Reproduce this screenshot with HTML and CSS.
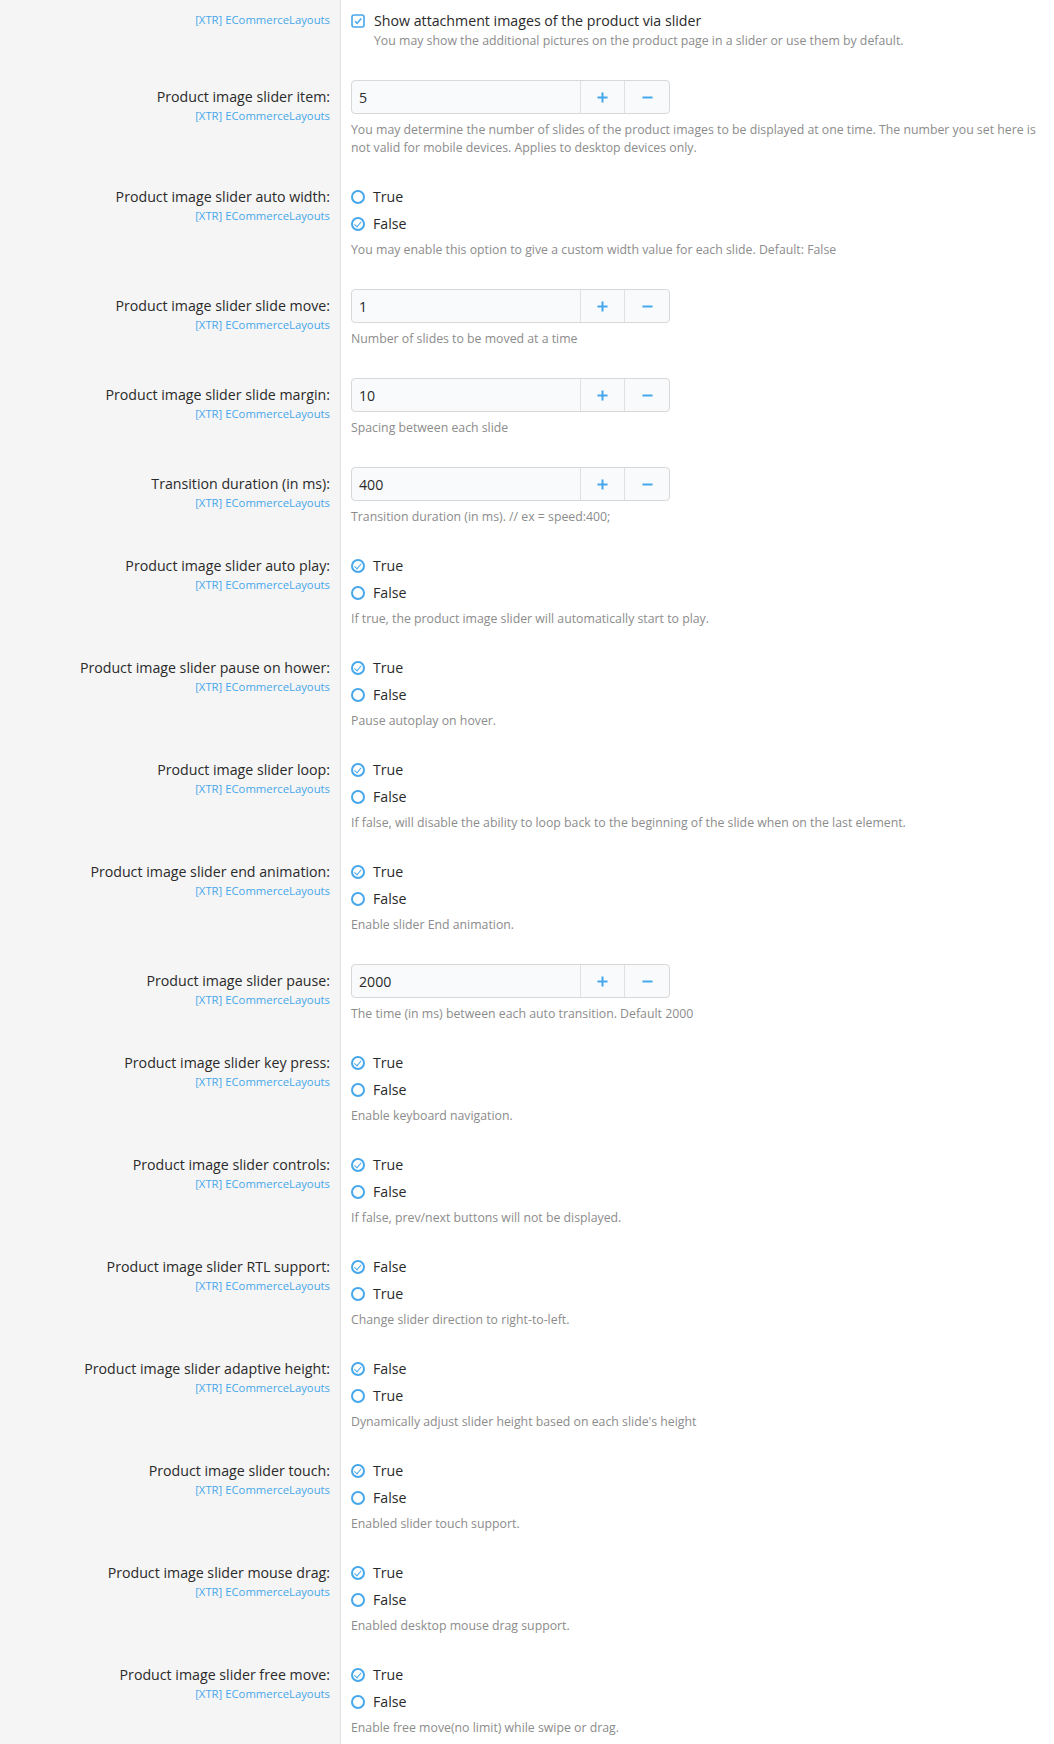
FILE: index.html
```html
<!DOCTYPE html>
<html lang="en">
<head>
  <meta charset="UTF-8">
  <meta name="viewport" content="width=device-width, initial-scale=1.0">
  <link rel="stylesheet" href="styles.css">
  <title>Options</title>
</head>
<body>

<div class="form">

  <div class="row row--first">
    <div class="row-label">
      <a class="addon-hint" href="#">[XTR] ECommerceLayouts</a>
    </div>
    <div class="row-input">
      <label class="check">
        <svg class="icon" viewBox="0 0 14 14"><rect x="1" y="1" width="12" height="12" rx="2" fill="none" stroke="#47a7eb" stroke-width="1.6"/><path d="M4 7.2l2.1 2.2L10.2 4.6" fill="none" stroke="#47a7eb" stroke-width="1.6"/></svg>
        <span>Show attachment images of the product via slider</span>
      </label>
      <div class="explain explain--check">You may show the additional pictures on the product page in a slider or use them by default.</div>
    </div>
  </div>

  <div class="row row--number">
    <div class="row-label">
      <div class="label-text">Product image slider item:</div>
      <a class="addon-hint" href="#">[XTR] ECommerceLayouts</a>
    </div>
    <div class="row-input">
      <div class="spinbox">
        <input type="text" value="5">
        <button class="spin-btn"><svg viewBox="0 0 12 12"><path d="M6 0.5v11M0.5 6h11" stroke="#47a7eb" stroke-width="2.2"/></svg></button>
        <button class="spin-btn"><svg viewBox="0 0 12 12"><path d="M0.5 6h11" stroke="#47a7eb" stroke-width="2.2"/></svg></button>
      </div>
      <div class="explain">You may determine the number of slides of the product images to be displayed at one time. The number you set here is not valid for mobile devices. Applies to desktop devices only.</div>
    </div>
  </div>

  <div class="row">
    <div class="row-label">
      <div class="label-text">Product image slider auto width:</div>
      <a class="addon-hint" href="#">[XTR] ECommerceLayouts</a>
    </div>
    <div class="row-input">
      <ul class="radios">
        <li><span class="radio"></span>True</li>
        <li><span class="radio radio--on"></span>False</li>
      </ul>
      <div class="explain">You may enable this option to give a custom width value for each slide. Default: False</div>
    </div>
  </div>

  <div class="row row--number">
    <div class="row-label">
      <div class="label-text">Product image slider slide move:</div>
      <a class="addon-hint" href="#">[XTR] ECommerceLayouts</a>
    </div>
    <div class="row-input">
      <div class="spinbox">
        <input type="text" value="1">
        <button class="spin-btn"><svg viewBox="0 0 12 12"><path d="M6 0.5v11M0.5 6h11" stroke="#47a7eb" stroke-width="2.2"/></svg></button>
        <button class="spin-btn"><svg viewBox="0 0 12 12"><path d="M0.5 6h11" stroke="#47a7eb" stroke-width="2.2"/></svg></button>
      </div>
      <div class="explain">Number of slides to be moved at a time</div>
    </div>
  </div>

  <div class="row row--number">
    <div class="row-label">
      <div class="label-text">Product image slider slide margin:</div>
      <a class="addon-hint" href="#">[XTR] ECommerceLayouts</a>
    </div>
    <div class="row-input">
      <div class="spinbox">
        <input type="text" value="10">
        <button class="spin-btn"><svg viewBox="0 0 12 12"><path d="M6 0.5v11M0.5 6h11" stroke="#47a7eb" stroke-width="2.2"/></svg></button>
        <button class="spin-btn"><svg viewBox="0 0 12 12"><path d="M0.5 6h11" stroke="#47a7eb" stroke-width="2.2"/></svg></button>
      </div>
      <div class="explain">Spacing between each slide</div>
    </div>
  </div>

  <div class="row row--number">
    <div class="row-label">
      <div class="label-text">Transition duration (in ms):</div>
      <a class="addon-hint" href="#">[XTR] ECommerceLayouts</a>
    </div>
    <div class="row-input">
      <div class="spinbox">
        <input type="text" value="400">
        <button class="spin-btn"><svg viewBox="0 0 12 12"><path d="M6 0.5v11M0.5 6h11" stroke="#47a7eb" stroke-width="2.2"/></svg></button>
        <button class="spin-btn"><svg viewBox="0 0 12 12"><path d="M0.5 6h11" stroke="#47a7eb" stroke-width="2.2"/></svg></button>
      </div>
      <div class="explain">Transition duration (in ms). // ex = speed:400;</div>
    </div>
  </div>

  <div class="row">
    <div class="row-label">
      <div class="label-text">Product image slider auto play:</div>
      <a class="addon-hint" href="#">[XTR] ECommerceLayouts</a>
    </div>
    <div class="row-input">
      <ul class="radios">
        <li><span class="radio radio--on"></span>True</li>
        <li><span class="radio"></span>False</li>
      </ul>
      <div class="explain">If true, the product image slider will automatically start to play.</div>
    </div>
  </div>

  <div class="row">
    <div class="row-label">
      <div class="label-text">Product image slider pause on hower:</div>
      <a class="addon-hint" href="#">[XTR] ECommerceLayouts</a>
    </div>
    <div class="row-input">
      <ul class="radios">
        <li><span class="radio radio--on"></span>True</li>
        <li><span class="radio"></span>False</li>
      </ul>
      <div class="explain">Pause autoplay on hover.</div>
    </div>
  </div>

  <div class="row">
    <div class="row-label">
      <div class="label-text">Product image slider loop:</div>
      <a class="addon-hint" href="#">[XTR] ECommerceLayouts</a>
    </div>
    <div class="row-input">
      <ul class="radios">
        <li><span class="radio radio--on"></span>True</li>
        <li><span class="radio"></span>False</li>
      </ul>
      <div class="explain">If false, will disable the ability to loop back to the beginning of the slide when on the last element.</div>
    </div>
  </div>

  <div class="row">
    <div class="row-label">
      <div class="label-text">Product image slider end animation:</div>
      <a class="addon-hint" href="#">[XTR] ECommerceLayouts</a>
    </div>
    <div class="row-input">
      <ul class="radios">
        <li><span class="radio radio--on"></span>True</li>
        <li><span class="radio"></span>False</li>
      </ul>
      <div class="explain">Enable slider End animation.</div>
    </div>
  </div>

  <div class="row row--number">
    <div class="row-label">
      <div class="label-text">Product image slider pause:</div>
      <a class="addon-hint" href="#">[XTR] ECommerceLayouts</a>
    </div>
    <div class="row-input">
      <div class="spinbox">
        <input type="text" value="2000">
        <button class="spin-btn"><svg viewBox="0 0 12 12"><path d="M6 0.5v11M0.5 6h11" stroke="#47a7eb" stroke-width="2.2"/></svg></button>
        <button class="spin-btn"><svg viewBox="0 0 12 12"><path d="M0.5 6h11" stroke="#47a7eb" stroke-width="2.2"/></svg></button>
      </div>
      <div class="explain">The time (in ms) between each auto transition. Default 2000</div>
    </div>
  </div>

  <div class="row">
    <div class="row-label">
      <div class="label-text">Product image slider key press:</div>
      <a class="addon-hint" href="#">[XTR] ECommerceLayouts</a>
    </div>
    <div class="row-input">
      <ul class="radios">
        <li><span class="radio radio--on"></span>True</li>
        <li><span class="radio"></span>False</li>
      </ul>
      <div class="explain">Enable keyboard navigation.</div>
    </div>
  </div>

  <div class="row">
    <div class="row-label">
      <div class="label-text">Product image slider controls:</div>
      <a class="addon-hint" href="#">[XTR] ECommerceLayouts</a>
    </div>
    <div class="row-input">
      <ul class="radios">
        <li><span class="radio radio--on"></span>True</li>
        <li><span class="radio"></span>False</li>
      </ul>
      <div class="explain">If false, prev/next buttons will not be displayed.</div>
    </div>
  </div>

  <div class="row">
    <div class="row-label">
      <div class="label-text">Product image slider RTL support:</div>
      <a class="addon-hint" href="#">[XTR] ECommerceLayouts</a>
    </div>
    <div class="row-input">
      <ul class="radios">
        <li><span class="radio radio--on"></span>False</li>
        <li><span class="radio"></span>True</li>
      </ul>
      <div class="explain">Change slider direction to right-to-left.</div>
    </div>
  </div>

  <div class="row">
    <div class="row-label">
      <div class="label-text">Product image slider adaptive height:</div>
      <a class="addon-hint" href="#">[XTR] ECommerceLayouts</a>
    </div>
    <div class="row-input">
      <ul class="radios">
        <li><span class="radio radio--on"></span>False</li>
        <li><span class="radio"></span>True</li>
      </ul>
      <div class="explain">Dynamically adjust slider height based on each slide's height</div>
    </div>
  </div>

  <div class="row">
    <div class="row-label">
      <div class="label-text">Product image slider touch:</div>
      <a class="addon-hint" href="#">[XTR] ECommerceLayouts</a>
    </div>
    <div class="row-input">
      <ul class="radios">
        <li><span class="radio radio--on"></span>True</li>
        <li><span class="radio"></span>False</li>
      </ul>
      <div class="explain">Enabled slider touch support.</div>
    </div>
  </div>

  <div class="row">
    <div class="row-label">
      <div class="label-text">Product image slider mouse drag:</div>
      <a class="addon-hint" href="#">[XTR] ECommerceLayouts</a>
    </div>
    <div class="row-input">
      <ul class="radios">
        <li><span class="radio radio--on"></span>True</li>
        <li><span class="radio"></span>False</li>
      </ul>
      <div class="explain">Enabled desktop mouse drag support.</div>
    </div>
  </div>

  <div class="row">
    <div class="row-label">
      <div class="label-text">Product image slider free move:</div>
      <a class="addon-hint" href="#">[XTR] ECommerceLayouts</a>
    </div>
    <div class="row-input">
      <ul class="radios">
        <li><span class="radio radio--on"></span>True</li>
        <li><span class="radio"></span>False</li>
      </ul>
      <div class="explain">Enable free move(no limit) while swipe or drag.</div>
    </div>
  </div>

</div>

</body>
</html>
```

FILE: styles.css
```css
body {
  margin: 0;
  background: #fff;
  font-family: "Open Sans", "Noto Sans", sans-serif;
  color: #2a2a2a;
}

.form {
  background: linear-gradient(to right, #f5f5f5 0, #f5f5f5 340px, #e2e2e2 340px, #e2e2e2 341px, #fff 341px);
  min-height: 100vh;
}

.row {
  display: flex;
  padding: 15px 0;
}

.row--first {
  padding-top: 11px;
}

.row-label {
  width: 330px;
  padding-right: 10px;
  text-align: right;
  flex-shrink: 0;
}

.row--number .row-label {
  padding-top: 7px;
}

.label-text {
  font-size: 14.2px;
  line-height: 20px;
}

.addon-hint {
  display: block;
  font-size: 11.3px;
  line-height: 18px;
  color: #47a7eb;
  text-decoration: none;
}

.row-input {
  flex: 1;
  padding-left: 11px;
  padding-right: 10px;
}

.check {
  display: flex;
  align-items: center;
  gap: 9px;
  font-size: 14.2px;
  line-height: 20px;
}

.icon {
  width: 14px;
  height: 14px;
  flex-shrink: 0;
}

.explain {
  margin-top: 7px;
  font-size: 12.3px;
  line-height: 18px;
  color: #8c8c8c;
}

.explain--check {
  margin-top: 1px;
  padding-left: 23px;
}

.spinbox {
  display: flex;
  width: 319px;
  height: 34px;
  box-sizing: border-box;
  border: 1px solid #d8d8d8;
  border-radius: 4px;
  background: #f8fafc;
  overflow: hidden;
}

.spinbox input {
  width: 229px;
  border: 0;
  padding: 0 7px;
  background: transparent;
  font-family: inherit;
  font-size: 14.2px;
  color: #2a2a2a;
  box-sizing: border-box;
}

.spin-btn {
  width: 45px;
  border: 0;
  border-left: 1px solid #e0e0e0;
  background: transparent;
  display: flex;
  align-items: center;
  justify-content: center;
  padding: 0;
}

.spin-btn svg {
  width: 11px;
  height: 11px;
}

.radios {
  list-style: none;
  margin: 0;
  padding: 0;
}

.radios li {
  display: flex;
  align-items: center;
  gap: 8px;
  font-size: 14.2px;
  line-height: 20px;
  margin-bottom: 7px;
}

.radios li:last-child {
  margin-bottom: 0;
}

.radio {
  width: 14px;
  height: 14px;
  box-sizing: border-box;
  border: 2px solid #47a7eb;
  border-radius: 50%;
  position: relative;
}

.radio--on::after {
  content: "";
  position: absolute;
  left: 3px;
  top: 1px;
  width: 3px;
  height: 5.5px;
  border: solid #47a7eb;
  border-width: 0 1.8px 1.8px 0;
  transform: rotate(40deg);
}
```
